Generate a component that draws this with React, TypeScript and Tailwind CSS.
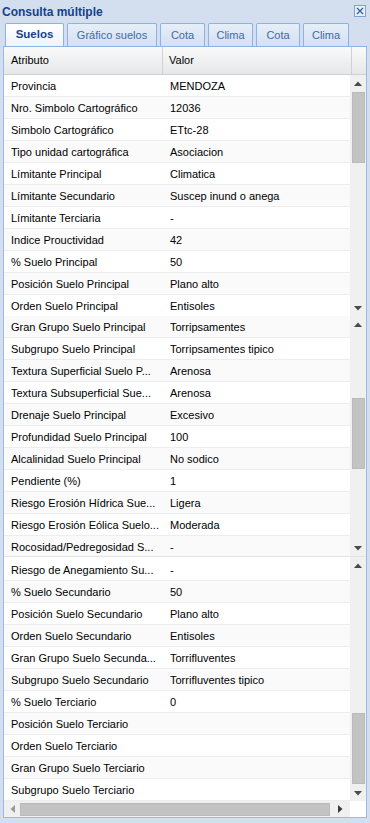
import React from "react";

const rows: [string, string][] = [
  ["Provincia", "MENDOZA"],
  ["Nro. Simbolo Cartográfico", "12036"],
  ["Simbolo Cartográfico", "ETtc-28"],
  ["Tipo unidad cartográfica", "Asociacion"],
  ["Límitante Principal", "Climatica"],
  ["Límitante Secundario", "Suscep inund o anega"],
  ["Límitante Terciaria", "-"],
  ["Indice Prouctividad", "42"],
  ["% Suelo Principal", "50"],
  ["Posición Suelo Principal", "Plano alto"],
  ["Orden Suelo Principal", "Entisoles"],
  ["Gran Grupo Suelo Principal", "Torripsamentes"],
  ["Subgrupo Suelo Principal", "Torripsamentes tipico"],
  ["Textura Superficial Suelo P...", "Arenosa"],
  ["Textura Subsuperficial Sue...", "Arenosa"],
  ["Drenaje Suelo Principal", "Excesivo"],
  ["Profundidad Suelo Principal", "100"],
  ["Alcalinidad Suelo Principal", "No sodico"],
  ["Pendiente (%)", "1"],
  ["Riesgo Erosión Hídrica Sue...", "Ligera"],
  ["Riesgo Erosión Eólica Suelo...", "Moderada"],
  ["Rocosidad/Pedregosidad S...", "-"],
  ["Riesgo de Anegamiento Su...", "-"],
  ["% Suelo Secundario", "50"],
  ["Posición Suelo Secundario", "Plano alto"],
  ["Orden Suelo Secundario", "Entisoles"],
  ["Gran Grupo Suelo Secunda...", "Torrifluventes"],
  ["Subgrupo Suelo Secundario", "Torrifluventes tipico"],
  ["% Suelo Terciario", "0"],
  ["Posición Suelo Terciario", ""],
  ["Orden Suelo Terciario", ""],
  ["Gran Grupo Suelo Terciario", ""],
  ["Subgrupo Suelo Terciario", ""],
];

const UpArrow = () => (
  <svg width="8" height="5" viewBox="0 0 8 5">
    <path d="M0 5 L4 0.5 L8 5Z" fill="#4a4a4a" />
  </svg>
);
const DownArrow = () => (
  <svg width="8" height="5" viewBox="0 0 8 5">
    <path d="M0 0 L8 0 L4 4.5Z" fill="#4a4a4a" />
  </svg>
);
const LeftArrow = () => (
  <svg width="5" height="8" viewBox="0 0 5 8">
    <path d="M5 0 L5 8 L0.5 4Z" fill="#9a9a9a" />
  </svg>
);
const RightArrow = () => (
  <svg width="5" height="8" viewBox="0 0 5 8">
    <path d="M0 0 L0 8 L4.5 4Z" fill="#3a3a3a" />
  </svg>
);

function Row({ a, v, i }: { a: string; v: string; i: number }) {
  return (
    <div
      className={
        "flex h-[22px] items-center pt-[2px] border-b border-[#ededed] " +
        (i % 2 === 0 ? "bg-white" : "bg-[#fafafa]")
      }
    >
      <div className="w-[159px] shrink-0 pl-[7px] whitespace-nowrap overflow-hidden">{a}</div>
      <div className="flex-1 pl-[7px] whitespace-nowrap overflow-hidden">{v}</div>
    </div>
  );
}

function VScroll({ thumbTop }: { thumbTop: string }) {
  return (
    <div className="w-[16px] shrink-0 flex flex-col bg-[#f0f0f0]">
      <div className="h-[16px] flex items-center justify-center">
        <UpArrow />
      </div>
      <div className="flex-1 flex flex-col items-center">
        <div className={"w-[13px] h-[71px] bg-[#c3c3c3] border border-[#bababa] " + thumbTop} />
      </div>
      <div className="h-[16px] flex items-center justify-center">
        <DownArrow />
      </div>
    </div>
  );
}

export default function App() {
  const seg1 = rows.slice(0, 11);
  const seg2 = rows.slice(11, 22);
  const seg3 = rows.slice(22, 33);
  return (
    <div
      className="w-[370px] h-[823px] bg-[#d3dfee] text-[11px] text-black overflow-hidden"
      style={{ fontFamily: '"Liberation Sans", Arial, sans-serif' }}
    >
      {/* title bar */}
      <div className="h-[23px] flex items-center justify-between pl-[2px] pr-[4px]">
        <span className="font-bold text-[12px] text-[#15428b]">Consulta múltiple</span>
        <div className="w-[12px] h-[12px] border border-[#7fa4d4] bg-[#e6eef9] flex items-center justify-center -mt-[1px]">
          <svg width="8" height="8" viewBox="0 0 8 8">
            <path d="M1 1 L7 7 M7 1 L1 7" stroke="#3a63a0" strokeWidth="1.4" />
          </svg>
        </div>
      </div>
      {/* tabs */}
      <div className="h-[24px] flex items-end gap-[3px] pl-[2px] border-b border-[#8db2e3] mx-[3px]">
        <div className="h-[23px] w-[59px] flex items-center justify-center border border-b-0 border-[#8db2e3] bg-gradient-to-b from-[#ffffff] to-[#eef4fb] rounded-t-[2px]">
          <span className="font-bold text-[11.5px] text-[#15428b]">Suelos</span>
        </div>
        {[
          ["Gráfico suelos", "w-[90px]"],
          ["Cota", "w-[45px]"],
          ["Clima", "w-[45px]"],
          ["Cota", "w-[44px]"],
          ["Clima", "w-[46px]"],
        ].map(([t, w], i) => (
          <div
            key={i}
            className={
              "h-[23px] flex items-center justify-center border border-b-0 border-[#8db2e3] bg-gradient-to-b from-[#e6eef9] to-[#d3e1f2] rounded-t-[2px] " +
              w
            }
          >
            <span className="text-[#416aa3]">{t}</span>
          </div>
        ))}
      </div>
      {/* body */}
      <div className="mx-[3px] border-x border-[#99bbe8] bg-white">
        {/* header */}
        <div className="h-[28px] flex items-center bg-gradient-to-b from-[#fafafa] to-[#e6e7e9] border-b border-[#d0d0d0]">
          <div className="w-[159px] h-full flex items-center pl-[7px] border-r border-[#d0d0d0]">Atributo</div>
          <div className="w-[189px] h-full flex items-center pl-[6px] border-r border-[#d0d0d0]">Valor</div>
          <div className="flex-1" />
        </div>
        {/* segment 1 */}
        <div className="h-[241px] flex overflow-hidden">
          <div className="flex-1">
            {seg1.map((r, i) => (
              <Row key={i} a={r[0]} v={r[1]} i={i} />
            ))}
          </div>
          <VScroll thumbTop="mt-[1px]" />
        </div>
        {/* segment 2 */}
        <div className="h-[240px] flex overflow-hidden">
          <div className="flex-1 overflow-hidden">
            {seg2.map((r, i) => (
              <Row key={i} a={r[0]} v={r[1]} i={i + 11} />
            ))}
          </div>
          <VScroll thumbTop="mt-[66px]" />
        </div>
        {/* segment 3 */}
        <div className="h-[245px] flex overflow-hidden border-t border-[#e4e4e4]">
          <div className="flex-1 overflow-hidden pt-[2px]">
            {seg3.map((r, i) => (
              <Row key={i} a={r[0]} v={r[1]} i={i} />
            ))}
          </div>
          <VScroll thumbTop="mt-[140px]" />
        </div>
        {/* horizontal scroll */}
        <div className="h-[17px] flex border-b border-[#99bbe8]">
          <div className="flex-1 flex items-center bg-[#f0f0f0]">
            <div className="w-[16px] flex justify-center">
              <LeftArrow />
            </div>
            <div className="w-[310px] h-[13px] bg-[#c3c3c3] border border-[#bababa]" />
            <div className="flex-1 flex justify-center">
              <RightArrow />
            </div>
          </div>
          <div className="w-[16px] bg-white" />
        </div>
      </div>
    </div>
  );
}
